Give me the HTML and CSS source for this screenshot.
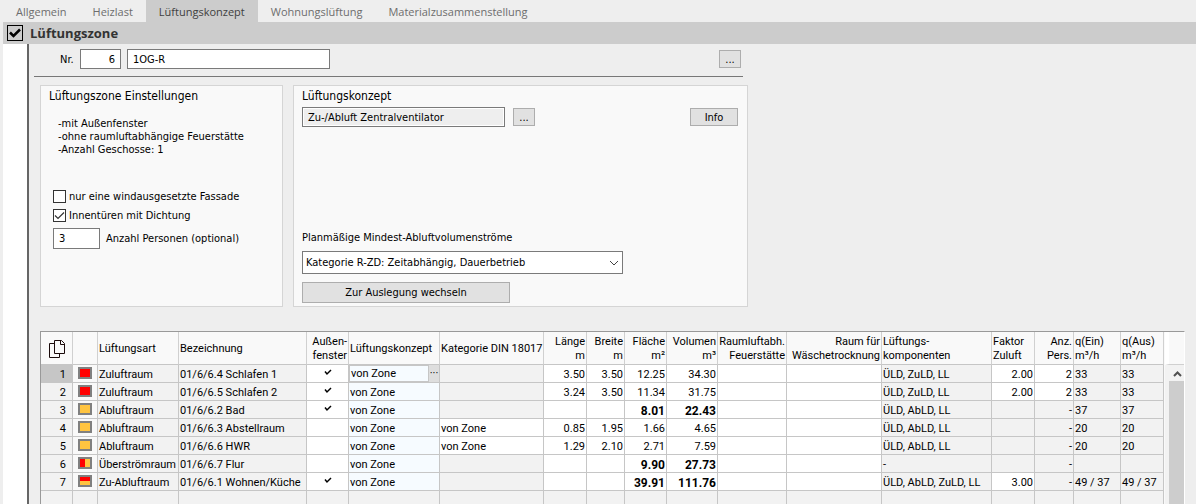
FILE: index.html
```html
<!DOCTYPE html>
<html lang="de">
<head>
<meta charset="utf-8">
<title>Lüftungskonzept</title>
<link rel="stylesheet" href="styles.css">
</head>
<body>
<div class="page">
  <nav class="tabs">
    <a class="tab" href="#allgemein">Allgemein</a>
    <a class="tab" href="#heizlast">Heizlast</a>
    <a class="tab tab-active" href="#konzept" aria-current="page">Lüftungskonzept</a>
    <a class="tab" href="#wohnung">Wohnungslüftung</a>
    <a class="tab" href="#material">Materialzusammenstellung</a>
  </nav>
  <label class="zone-bar">
    <input class="zone-check" type="checkbox" checked>
    <span>Lüftungszone</span>
  </label>
  <div class="body">
    <div class="gutter"></div>
    <main class="main">
      <section class="form">
        <div class="number-row">
          <label class="number-label" for="nr">Nr.</label>
          <input class="field field-nr" id="nr" type="text" value="6">
          <input class="field field-name" type="text" value="1OG-R" aria-label="Name der Zone">
          <button class="button button-dots push" type="button" aria-label="Zone wählen">...</button>
        </div>
        <div class="panels">
          <section class="panel panel-settings">
            <h2 class="panel-title">Lüftungszone Einstellungen</h2>
            <ul class="facts">
              <li>-mit Außenfenster</li>
              <li>-ohne raumluftabhängige Feuerstätte</li>
              <li>-Anzahl Geschosse: 1</li>
            </ul>
            <label class="option"><input class="check" type="checkbox"><span>nur eine windausgesetzte Fassade</span></label>
            <label class="option"><input class="check" type="checkbox" checked><span>Innentüren mit Dichtung</span></label>
            <div class="persons">
              <input class="field field-persons" id="persons" type="text" value="3">
              <label for="persons">Anzahl Personen (optional)</label>
            </div>
          </section>
          <section class="panel panel-concept">
            <h2 class="panel-title">Lüftungskonzept</h2>
            <div class="concept-row">
              <input class="field field-concept" type="text" value="Zu-/Abluft Zentralventilator" aria-label="Lüftungskonzept" readonly>
              <button class="button button-dots" type="button" aria-label="Konzept wählen">...</button>
              <button class="button button-info push" type="button">Info</button>
            </div>
            <label class="select-label" for="category">Planmäßige Mindest-Abluftvolumenströme</label>
            <div class="select-wrap">
              <select class="select" id="category"><option>Kategorie R-ZD: Zeitabhängig, Dauerbetrieb</option></select>
              <svg class="select-arrow" viewBox="0 0 10 6" aria-hidden="true"><path d="M1 1l4 4 4-4"/></svg>
            </div>
            <button class="button button-wide" type="button">Zur Auslegung wechseln</button>
          </section>
        </div>
      </section>
      <div class="grid">
        <table class="rooms">
          <colgroup>
            <col class="w32"><col class="w25"><col class="w81"><col class="w128"><col class="w42"><col class="w91"><col class="w104"><col class="w43"><col class="w38"><col class="w42"><col class="w51"><col class="w69"><col class="w95"><col class="w110"><col class="w43"><col class="w39"><col class="w47"><col class="w43">
          </colgroup>
          <thead>
            <tr>
              <th class="copy"><svg class="copy-icon" viewBox="0 0 16 18" aria-label="Kopieren"><path d="M5.500 3.500H0.500V17.500H10.500V13.500M5.500 0.500H12.500L15.500 3.500V13.500H5.500ZM11.500 0.500V4.500H15.500"/></svg></th>
              <th></th><th>Lüftungsart</th><th>Bezeichnung</th><th class="num">Außen-<br>fenster</th><th>Lüftungskonzept</th><th>Kategorie DIN 18017</th><th class="num">Länge<br>m</th><th class="num">Breite<br>m</th><th class="num">Fläche<br>m²</th><th class="num">Volumen<br>m³</th><th class="num">Raumluftabh.<br>Feuerstätte</th><th class="num">Raum für<br>Wäschetrocknung</th><th>Lüftungs-<br>komponenten</th><th>Faktor<br>Zuluft</th><th class="num">Anz.<br>Pers.</th><th>q(Ein)<br>m³/h</th><th>q(Aus)<br>m³/h</th>
            </tr>
          </thead>
          <tbody>
            <tr><td class="row-no current">1</td><td class="kind"><i class="chip supply"></i></td><td>Zuluftraum</td><td>01/6/6.4 Schlafen 1</td><td class="edit tick"><svg viewBox="0 0 8 7"><path d="M1 2.500L3 5L7 1"/></svg></td><td class="concept editing"><div class="cell-edit"><span class="cell-value">von Zone</span><button class="cell-button" type="button" aria-label="Auswählen">···</button></div></td><td></td><td class="edit num">3.50</td><td class="edit num">3.50</td><td class="edit num">12.25</td><td class="edit num">34.30</td><td class="edit"></td><td class="edit"></td><td>ÜLD, ZuLD, LL</td><td class="edit num">2.00</td><td class="edit num">2</td><td>33</td><td>33</td></tr>
            <tr><td class="row-no">2</td><td class="kind"><i class="chip supply"></i></td><td>Zuluftraum</td><td>01/6/6.5 Schlafen 2</td><td class="edit tick"><svg viewBox="0 0 8 7"><path d="M1 2.500L3 5L7 1"/></svg></td><td class="concept">von Zone</td><td></td><td class="edit num">3.24</td><td class="edit num">3.50</td><td class="edit num">11.34</td><td class="edit num">31.75</td><td class="edit"></td><td class="edit"></td><td>ÜLD, ZuLD, LL</td><td class="edit num">2.00</td><td class="edit num">2</td><td>33</td><td>33</td></tr>
            <tr><td class="row-no">3</td><td class="kind"><i class="chip exhaust"></i></td><td>Abluftraum</td><td>01/6/6.2 Bad</td><td class="edit tick"><svg viewBox="0 0 8 7"><path d="M1 2.500L3 5L7 1"/></svg></td><td class="concept">von Zone</td><td></td><td class="edit"></td><td class="edit"></td><td class="edit num strong">8.01</td><td class="edit num strong">22.43</td><td class="edit"></td><td class="edit"></td><td>ÜLD, AbLD, LL</td><td></td><td class="num">-</td><td>37</td><td>37</td></tr>
            <tr><td class="row-no">4</td><td class="kind"><i class="chip exhaust"></i></td><td>Abluftraum</td><td>01/6/6.3 Abstellraum</td><td class="edit"></td><td class="concept">von Zone</td><td class="edit">von Zone</td><td class="edit num">0.85</td><td class="edit num">1.95</td><td class="edit num">1.66</td><td class="edit num">4.65</td><td class="edit"></td><td class="edit"></td><td>ÜLD, AbLD, LL</td><td></td><td class="num">-</td><td>20</td><td>20</td></tr>
            <tr><td class="row-no">5</td><td class="kind"><i class="chip exhaust"></i></td><td>Abluftraum</td><td>01/6/6.6 HWR</td><td class="edit"></td><td class="concept">von Zone</td><td class="edit">von Zone</td><td class="edit num">1.29</td><td class="edit num">2.10</td><td class="edit num">2.71</td><td class="edit num">7.59</td><td class="edit"></td><td class="edit"></td><td>ÜLD, AbLD, LL</td><td></td><td class="num">-</td><td>20</td><td>20</td></tr>
            <tr><td class="row-no">6</td><td class="kind"><i class="chip overflow"></i></td><td>Überströmraum</td><td>01/6/6.7 Flur</td><td class="edit"></td><td class="concept">von Zone</td><td></td><td class="edit"></td><td class="edit"></td><td class="edit num strong">9.90</td><td class="edit num strong">27.73</td><td class="edit"></td><td class="edit"></td><td>-</td><td></td><td class="num">-</td><td></td><td></td></tr>
            <tr><td class="row-no">7</td><td class="kind"><i class="chip both"></i></td><td>Zu-Abluftraum</td><td>01/6/6.1 Wohnen/Küche</td><td class="edit tick"><svg viewBox="0 0 8 7"><path d="M1 2.500L3 5L7 1"/></svg></td><td class="concept">von Zone</td><td></td><td class="edit"></td><td class="edit"></td><td class="edit num strong">39.91</td><td class="edit num strong">111.76</td><td class="edit"></td><td class="edit"></td><td>ÜLD, AbLD, ZuLD, LL</td><td class="edit num">3.00</td><td class="num">-</td><td>49 / 37</td><td>49 / 37</td></tr>
            <tr><td></td><td></td><td></td><td></td><td></td><td></td><td></td><td></td><td></td><td></td><td></td><td></td><td></td><td></td><td></td><td></td><td></td><td></td></tr>
          </tbody>
        </table>
        <div class="scroll">
          <div class="scroll-head"></div>
          <button class="scroll-up" type="button" aria-label="Nach oben"><svg viewBox="0 0 9 6" aria-hidden="true"><path d="M1 5l3.500-3.500L8 5"/></svg></button>
          <div class="scroll-thumb"></div>
        </div>
      </div>
    </main>
  </div>
</div>
</body>
</html>
```
FILE: styles.css
```css
* { box-sizing: border-box; }

body {
  margin: 0;
  background: #eeeeee;
  color: #000;
  font: 11px/13px "DejaVu Sans Condensed", "Open Sans", sans-serif;
}

input, button, select { font: inherit; color: inherit; margin: 0; }

.page {
  display: flex;
  flex-direction: column;
  height: 100vh;
  overflow: hidden;
  padding-left: 3px;
}

.tabs { display: flex; flex: none; height: 22px; }
.tab {
  padding: 0 13px;
  color: #6d6d6d;
  font: 11px/24px "Open Sans", sans-serif;
  text-decoration: none;
}
.tab-active { background: #cccccc; color: #404040; }

.zone-bar {
  display: flex;
  flex: none;
  align-items: center;
  gap: 7px;
  height: 22px;
  padding-left: 4px;
  background: #cccccc;
  color: #333;
  font: bold 13px/22px "Open Sans", sans-serif;
}
.zone-check, .check { appearance: none; flex: none; background: center / 100% no-repeat; }
.zone-check {
  width: 16px;
  height: 16px;
  border: 1px solid #000;
  background-image: url("data:image/svg+xml,%3Csvg xmlns='http://www.w3.org/2000/svg' viewBox='0 0 14 14'%3E%3Cpath d='M2 6.500L5.500 10L12 3.500' fill='none' stroke='black' stroke-width='2.500'/%3E%3C/svg%3E");
}

.body { display: flex; flex: 1; min-height: 0; }
.gutter { flex: none; width: 26px; background: #fff; border-right: 2px solid #666; }
.main { display: flex; flex-direction: column; flex: 1; min-width: 0; padding-right: 11px; }

.form { max-width: 719px; }
.number-row {
  display: flex;
  align-items: center;
  gap: 6px;
  height: 33px;
  margin: 0 5px;
  padding: 0 2px 2px 26px;
  border-bottom: 1px solid #777;
}
.number-label { width: 14px; }
.push { margin-left: auto; }

.field {
  height: 20px;
  padding: 0 5px;
  border: 1px solid #7a7a7a;
  border-radius: 0;
  background: #fff;
}
.field-nr { width: 41px; text-align: right; }
.field-name { width: 203px; }
.field-persons { width: 47px; height: 21px; }
.field-concept { width: 203px; background: #eee; box-shadow: inset 0 0 0 1px #fff; }

.button {
  height: 18px;
  padding: 0;
  border: 1px solid #adadad;
  border-radius: 0;
  background: #e1e1e1;
}
.button-dots { width: 22px; }
.button-info { width: 48px; }
.button-wide { width: 208px; height: 21px; margin-top: 8px; }

.panels { display: flex; gap: 10px; margin: 8px 0 0 11px; }
.panel { min-height: 222px; border: 1px solid #d5d5d5; background: #f9f9f9; }
.panel-settings { width: 243px; padding: 3px 8px 0 12px; }
.panel-concept { flex: 1; padding: 3px 9px 0 8px; }
.panel-title { margin: 0; font-weight: normal; font-size: 12px; line-height: 15px; }
.panel-settings .panel-title { margin-left: -4px; }

.facts { margin: 13px 0 34px 5px; padding: 0; list-style: none; white-space: nowrap; }
.option { display: flex; align-items: center; gap: 3px; height: 13px; margin-bottom: 6px; white-space: nowrap; }
.check { width: 13px; height: 13px; border: 1px solid #333; background-color: #fff; }
.check:checked {
  background-image: url("data:image/svg+xml,%3Csvg xmlns='http://www.w3.org/2000/svg' viewBox='0 0 11 11'%3E%3Cpath d='M1 5.500L4 8.500L10 2.500' fill='none' stroke='%23333' stroke-width='1.200'/%3E%3C/svg%3E");
}
.persons { display: flex; align-items: center; gap: 6px; margin-top: 5px; }
.option + .persons { margin-top: -1px; }

.concept-row { display: flex; align-items: center; gap: 8px; margin-top: 3px; }
.select-label { display: block; margin-top: 104px; }
.select-wrap { position: relative; width: 321px; height: 23px; margin-top: 7px; }
.select {
  display: block;
  appearance: none;
  width: 100%;
  height: 100%;
  padding: 0 3px;
  border: 1px solid #7a7a7a;
  border-radius: 0;
  background: #fff;
}
.select-arrow { position: absolute; right: 4px; top: 9px; width: 10px; height: 6px; fill: none; stroke: #444; pointer-events: none; }

.option + .persons { margin-top: 4px; }

.grid {
  display: flex;
  flex: 1;
  align-items: stretch;
  min-height: 0;
  margin: 24px 0 0 11px;
  overflow: hidden;
  border-top: 1px solid #999;
  border-left: 1px solid #999;
  border-right: 1px solid #fff;
  background: #f2f2f2;
}
.rooms {
  flex: 1;
  align-self: flex-start;
  width: 100%;
  min-width: 1123px;
  table-layout: fixed;
  border-collapse: separate;
  border-spacing: 0;
  font: 11px/14px Roboto, sans-serif;
}
.w25 { width: 25px; }
.w32 { width: 32px; }
.w38 { width: 38px; }
.w39 { width: 39px; }
.w42 { width: 42px; }
.w43 { width: 43px; }
.w47 { width: 47px; }
.w51 { width: 51px; }
.w69 { width: 69px; }
.w81 { width: 81px; }
.w91 { width: 91px; }
.w95 { width: 95px; }
.w104 { width: 104px; }
.w110 { width: 110px; }
.w128 { width: 128px; }

.rooms th, .rooms td {
  border-right: 1px solid #c6c6c6;
  border-bottom: 1px solid #c6c6c6;
  white-space: nowrap;
  text-align: left;
}
.rooms th { height: 33px; padding: 3px 1px 1px; background: #f9f9f9; font-weight: normal; border-right-color: #d0d0d0; }
.rooms td { height: 18px; padding: 2px 1px 0; background: #f2f2f2; }
.rooms .num { text-align: right; }
.rooms .copy { text-align: center; }
.rooms .row-no { padding-right: 6px; text-align: right; }
.rooms .current { background: #c6c6c6; }
.rooms .kind { background: #f9f9f9; padding: 0 0 1px 5px; }
.rooms .edit { background: #fff; }
.rooms .concept { background: #f6fbff; }
.rooms .strong { font-weight: bold; font-size: 12px; }
.rooms .tick { padding: 0 1px 2px; }
.rooms .editing { padding: 0; }

.copy-icon { display: block; width: 16px; height: 18px; margin: 0 auto; fill: none; stroke: #1a0a0a; }
.tick svg { display: block; width: 8px; height: 7px; margin: 0 auto; fill: none; stroke: #000; stroke-width: 1.500; }

.chip { display: block; width: 14px; height: 12px; border: 2px solid #808080; }
.supply { background: #ff0000; }
.exhaust { background: #ffc440; }
.overflow { background: linear-gradient(90deg, #ff0000 50%, #ffc440 50%); }
.both { background: linear-gradient(#ff0000 50%, #ffc440 50%); }

.cell-edit { display: flex; height: 17px; }
.cell-value { flex: 1; padding: 1px 1px 0; border: 1px solid #c6c6c6; line-height: 14px; }
.cell-button { width: 10px; padding: 0; border: 0; background: #dedede; line-height: 14px; }

.scroll { display: flex; flex: none; flex-direction: column; width: 21px; padding-left: 4px; border-left: 1px solid #f9f9f9; }
.scroll-head { flex: none; height: 33px; margin-left: -4px; border-left: 4px solid #fff; border-bottom: 1px solid #d0d0d0; background: #f9f9f9; }
.scroll-up { display: grid; flex: none; place-items: center; height: 16px; padding: 2px 0 0; border: 0; background: #f2f2f2; }
.scroll-up svg { width: 9px; height: 6px; fill: none; stroke: #505050; stroke-width: 2; }
.scroll-thumb { flex: 1; background: #cdcdcd; }
```
